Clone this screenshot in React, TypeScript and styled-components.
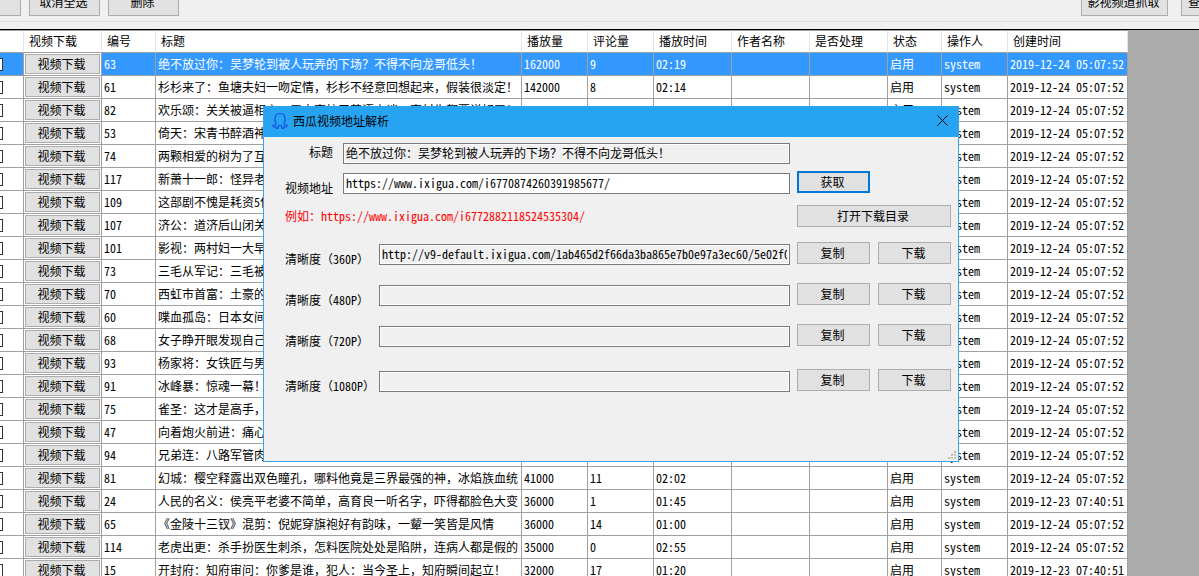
import React from 'react';
import styled, { createGlobalStyle, css } from 'styled-components';

const sans = `"Noto Sans Mono CJK SC", "Noto Sans CJK SC", "Liberation Mono", monospace`;

const GlobalStyle = createGlobalStyle`
  *, *::before, *::after { box-sizing: border-box; }
  body { margin: 0; background: #ababab; }
  body, button, input, table { font-family: ${sans}; font-size: 12px; color: #000; }
`;

const Page = styled.main`
  position: relative;
  height: 100vh;
  display: flex;
  flex-direction: column;
  overflow: hidden;
  background: #ababab;
`;

const ToolbarArea = styled.header`
  flex: none;
  padding-bottom: 7px;
  background: #f0f0f0;
  border-bottom: 1px solid #000;
`;

const Toolbar = styled.div`
  display: flex;
  align-items: flex-end;
  justify-content: space-between;
  height: 22px;
  padding-bottom: 5px;
  overflow: hidden;
  border-bottom: 1px solid #dcdcdc;
`;

const ToolGroup = styled.div<{ $gap: number }>`
  display: flex;
  gap: ${(p) => p.$gap}px;
`;

const buttonLook = css`
  flex: none;
  padding: 0 2px 0 0;
  background: #e1e1e1;
  border: 1px solid #adadad;
  line-height: 14px;
  text-align: center;
  white-space: nowrap;
`;

const ToolButton = styled.button<{ $width: number; $cut?: 'left' | 'right' }>`
  ${buttonLook}
  width: ${(p) => p.$width}px;
  height: 28px;
  ${(p) => p.$cut === 'left' && 'border-left: 0;'}
  ${(p) => p.$cut === 'right' && 'border-right: 0; padding-left: 6px; text-align: left;'}
`;

const Grid = styled.table`
  flex: none;
  width: 1128px;
  table-layout: fixed;
  border-collapse: separate;
  border-spacing: 0;
  border-top: 1px solid #a0a0a0;
  background: #fff;
`;

const HeadCell = styled.th`
  height: 22px;
  padding: 0 0 2px 5px;
  border-right: 1px solid #e5e5e5;
  border-bottom: 1px solid #a0a0a0;
  font-weight: normal;
  text-align: left;
  line-height: 18px;
  white-space: nowrap;
`;

const Row = styled.tr<{ $selected: boolean }>`
  background: ${(p) => (p.$selected ? '#3399ff' : '#fff')};
  color: ${(p) => (p.$selected ? '#fff' : '#000')};
`;

const Cell = styled.td`
  height: 23px;
  padding: 0 0 0 2px;
  border-right: 1px solid #a0a0a0;
  border-bottom: 1px solid #a0a0a0;
  line-height: 18px;
  white-space: nowrap;
  overflow: hidden;
`;

const CheckCell = styled(Cell)`
  padding: 0;
`;

const Check = styled.input`
  display: block;
  appearance: none;
  width: 13px;
  height: 13px;
  margin: 0 0 0 -10px;
  background: #fff;
  border: 1px solid #333;
`;

const ButtonCell = styled(Cell)`
  padding: 1px;
  background: #fff;
`;

const CellButton = styled.button`
  ${buttonLook}
  display: block;
  width: 100%;
  height: 20px;
`;

const Dialog = styled.section`
  position: absolute;
  left: 263px;
  top: 106px;
  width: 696px;
  min-height: 356px;
  background: #f0f0f0;
  border: 1px solid #3ba3ea;
  border-top: 0;
`;

const TitleBar = styled.div`
  display: flex;
  align-items: center;
  height: 31px;
  padding: 0 10px 2px 8px;
  background: #26a4f2;
`;

const DialogTitle = styled.h1`
  flex: 1;
  margin: 0 0 0 5px;
  font-size: 12px;
  font-weight: normal;
  line-height: 18px;
`;

const CloseButton = styled.button`
  display: flex;
  padding: 0;
  background: none;
  border: 0;
`;

const Form = styled.form`
  display: flex;
  flex-direction: column;
  padding: 4px 7px 0 21px;
`;

const Line = styled.div<{ $space?: number }>`
  display: flex;
  height: 24px;
  margin-top: ${(p) => p.$space ?? 0}px;
`;

const Label = styled.label<{ $wide?: boolean; $drop?: number }>`
  flex: none;
  width: ${(p) => (p.$wide ? 94 : 58)}px;
  padding: ${(p) => p.$drop ?? 10}px ${(p) => (p.$wide ? 0 : 10)}px 0 0;
  text-align: ${(p) => (p.$wide ? 'left' : 'right')};
  line-height: 14px;
  white-space: nowrap;
`;

const Field = styled.input`
  flex: 1;
  min-width: 0;
  height: 21px;
  margin: 2px 7px 0 0;
  padding: 0 2px 3px;
  border: 1px solid #7a7a7a;
  border-radius: 0;
  outline: 0;
  background: #fff;
  box-shadow: inset 0 0 0 1px #fff;

  &:read-only { background: #f0f0f0; }
`;

const Actions = styled.div`
  flex: none;
  display: flex;
  align-items: flex-start;
  gap: 8px;
  width: 154px;
`;

const ActionButton = styled.button<{ $primary?: boolean; $full?: boolean }>`
  ${buttonLook}
  width: ${(p) => (p.$full ? '100%' : '73px')};
  height: 22px;
  ${(p) => p.$primary && 'border: 2px solid #0078d7;'}
`;

const Example = styled.p`
  flex: 1;
  margin: 0;
  line-height: 22px;
  color: #f00;
`;

const Grip = styled.svg`
  position: absolute;
  right: 2px;
  bottom: 2px;
`;

type Video = {
  id: number;
  title: string;
  plays?: number;
  comments?: number;
  length?: string;
  created?: string;
};

const videos: Video[] = [
  { id: 63, title: '绝不放过你：吴梦轮到被人玩弄的下场？不得不向龙哥低头！', plays: 162000, comments: 9, length: '02:19' },
  { id: 61, title: '杉杉来了：鱼塘夫妇一吻定情，杉杉不经意回想起来，假装很淡定！', plays: 142000, comments: 8, length: '02:14' },
  { id: 82, title: '欢乐颂：关关被逼相亲，五大高校口英语交谈，高材生都要说好了！' },
  { id: 53, title: '倚天：宋青书醉酒神' },
  { id: 74, title: '两颗相爱的树为了互' },
  { id: 117, title: '新萧十一郎：怪异老' },
  { id: 109, title: '这部剧不愧是耗资5亿' },
  { id: 107, title: '济公：道济后山闭关' },
  { id: 101, title: '影视：两村妇一大早' },
  { id: 73, title: '三毛从军记：三毛被' },
  { id: 70, title: '西虹市首富：土豪的' },
  { id: 60, title: '喋血孤岛：日本女间' },
  { id: 68, title: '女子睁开眼发现自己' },
  { id: 93, title: '杨家将：女铁匠与男' },
  { id: 91, title: '冰峰暴：惊魂一幕！' },
  { id: 75, title: '雀圣：这才是高手，' },
  { id: 47, title: '向着炮火前进：痛心' },
  { id: 94, title: '兄弟连：八路军管肉' },
  { id: 81, title: '幻城：樱空释露出双色瞳孔，哪料他竟是三界最强的神，冰焰族血统', plays: 41000, comments: 11, length: '02:02' },
  { id: 24, title: '人民的名义：侯亮平老婆不简单，高育良一听名字，吓得都脸色大变', plays: 36000, comments: 1, length: '01:45', created: '2019-12-23 07:40:51' },
  { id: 65, title: '《金陵十三钗》混剪：倪妮穿旗袍好有韵味，一颦一笑皆是风情', plays: 36000, comments: 14, length: '01:00' },
  { id: 114, title: '老虎出更：杀手扮医生刺杀，怎料医院处处是陷阱，连病人都是假的', plays: 35000, comments: 0, length: '02:55' },
  { id: 15, title: '开封府：知府审问：你爹是谁，犯人：当今圣上，知府瞬间起立！', plays: 32000, comments: 17, length: '01:20', created: '2019-12-23 07:40:51' },
];

const columns: [string, number][] = [
  ['', 24],
  ['视频下载', 78],
  ['编号', 54],
  ['标题', 366],
  ['播放量', 66],
  ['评论量', 66],
  ['播放时间', 78],
  ['作者名称', 78],
  ['是否处理', 78],
  ['状态', 54],
  ['操作人', 66],
  ['创建时间', 120],
];

const qualities = [
  { name: '360P', space: 13, url: 'http://v9-default.ixigua.com/1ab465d2f66da3ba865e7b0e97a3ec60/5e02f0' },
  { name: '480P', space: 17, url: '' },
  { name: '720P', space: 17, url: '' },
  { name: '1080P', space: 21, url: '' },
];

const AppIcon = () => (
  <svg width="16" height="18" viewBox="0 0 16 18" fill="none" stroke="#1450e0" strokeWidth="1.2" aria-hidden="true">
    <path d="M4 11C2.400 8.500 2 1.500 8 1.500S13.600 8.500 12 11" />
    <path d="M4 11L3.600 12.200 1 13.300 1.400 14.800 3.800 14.500 4.600 16.500 6 16.300 6.400 13.800Q8 12.800 9.600 13.800L10 16.300 11.400 16.500 12.200 14.500 14.600 14.800 15 13.300 12.400 12.200 12 11" />
  </svg>
);

export default function App() {
  return (
    <>
      <GlobalStyle />
      <Page>
        <ToolbarArea>
          <Toolbar>
            <ToolGroup $gap={8}>
              <ToolButton $width={21} $cut="left" />
              <ToolButton $width={71}>取消全选</ToolButton>
              <ToolButton $width={71}>删除</ToolButton>
            </ToolGroup>
            <ToolGroup $gap={13}>
              <ToolButton $width={87}>影视频道抓取</ToolButton>
              <ToolButton $width={18} $cut="right">查</ToolButton>
            </ToolGroup>
          </Toolbar>
        </ToolbarArea>

        <Grid>
          <colgroup>
            {columns.map(([name, width]) => (
              <col key={name} width={width} />
            ))}
          </colgroup>
          <thead>
            <tr>
              {columns.map(([name]) => (
                <HeadCell key={name}>{name}</HeadCell>
              ))}
            </tr>
          </thead>
          <tbody>
            {videos.map((v, i) => (
              <Row key={v.id} $selected={i === 0}>
                <CheckCell>
                  <Check type="checkbox" aria-label={String(v.id)} />
                </CheckCell>
                <ButtonCell>
                  <CellButton>视频下载</CellButton>
                </ButtonCell>
                <Cell>{v.id}</Cell>
                <Cell>{v.title}</Cell>
                <Cell>{v.plays}</Cell>
                <Cell>{v.comments}</Cell>
                <Cell>{v.length}</Cell>
                <Cell />
                <Cell />
                <Cell>启用</Cell>
                <Cell>system</Cell>
                <Cell>{v.created ?? '2019-12-24 05:07:52'}</Cell>
              </Row>
            ))}
          </tbody>
        </Grid>

        <Dialog role="dialog" aria-labelledby="dialog-title">
          <TitleBar>
            <AppIcon />
            <DialogTitle id="dialog-title">西瓜视频地址解析</DialogTitle>
            <CloseButton type="button">
              <svg width="11" height="11" viewBox="0 0 11 11" stroke="#000" strokeWidth="1" aria-hidden="true">
                <path d="M.5.5l10 10M10.500.5l-10 10" />
              </svg>
            </CloseButton>
          </TitleBar>
          <Form onSubmit={(e) => e.preventDefault()}>
            <Line>
              <Label htmlFor="title" $drop={4}>标题</Label>
              <Field id="title" readOnly defaultValue="绝不放过你：吴梦轮到被人玩弄的下场？不得不向龙哥低头！" />
              <Actions />
            </Line>
            <Line $space={6}>
              <Label htmlFor="address">视频地址</Label>
              <Field id="address" defaultValue="https://www.ixigua.com/i6770874260391985677/" />
              <Actions>
                <ActionButton $primary>获取</ActionButton>
              </Actions>
            </Line>
            <Line $space={10}>
              <Example>例如：https://www.ixigua.com/i6772882118524535304/</Example>
              <Actions>
                <ActionButton type="button" $full>打开下载目录</ActionButton>
              </Actions>
            </Line>
            {qualities.map((q) => (
              <Line key={q.name} $space={q.space}>
                <Label htmlFor={q.name} $wide>清晰度（{q.name}）</Label>
                <Field id={q.name} readOnly defaultValue={q.url} />
                <Actions>
                  <ActionButton type="button">复制</ActionButton>
                  <ActionButton type="button">下载</ActionButton>
                </Actions>
              </Line>
            ))}
          </Form>
          <Grip width="8" height="8" viewBox="0 0 8 8" fill="#bfbfbf" aria-hidden="true">
            <path d="M6 0h2v2H6zM3 3h2v2H3zM6 3h2v2H6zM0 6h2v2H0zM3 6h2v2H3zM6 6h2v2H6z" />
          </Grip>
        </Dialog>
      </Page>
    </>
  );
}
